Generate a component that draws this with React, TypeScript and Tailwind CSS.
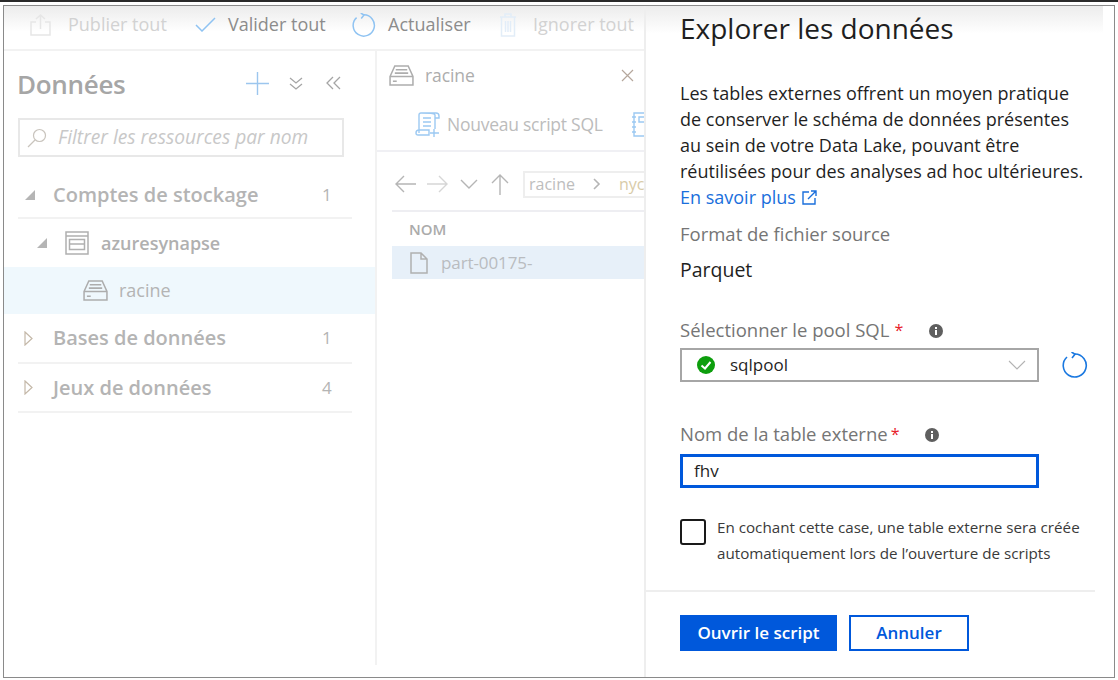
import React from 'react';

const uiFont = 'font-["Open_Sans","Noto_Sans",sans-serif]';

const ToolbarItem = ({ icon, label, labelClass, width }: { icon: React.ReactNode; label: string; labelClass: string; width: string }) => (
  <div className={`flex items-center shrink-0 ${width}`}>
    {icon}
    <span className={`text-[18px] whitespace-nowrap ${labelClass}`}>{label}</span>
  </div>
);

const DiskIcon = ({ className }: { className: string }) => (
  <svg viewBox="0 0 26 22" className={className} fill="none" stroke="#adadad" strokeWidth="1.6">
    <path d="M1 12 L6 1 H20 L25 12 V21 H1 Z M1 12 H25" />
    <path d="M7 5 H19 M6 8.5 H20" />
    <path d="M4 17 H8" />
  </svg>
);

const RefreshIcon = ({ className, color }: { className: string; color: string }) => (
  <svg viewBox="0 0 26 26" className={className} fill="none" stroke={color} strokeWidth="1.6">
    <path d="M13 2 A11.5 11.5 0 1 1 5 5" />
    <path d="M9.5 0 L13 2.2 L10 6" />
  </svg>
);

const Row = ({ label, count, open, height }: { label: string; count: string; open: boolean; height: string }) => (
  <div className={`ml-[14px] w-[334px] flex items-center border-b-2 border-[#f2f2f2] shrink-0 ${height}`}>
    <div className="w-[35px] flex justify-start pl-[6px]">
      {open ? (
        <svg width="12" height="12" viewBox="0 0 12 12"><path d="M11 1 V11 H1 Z" fill="#b5b5b5" /></svg>
      ) : (
        <svg width="9" height="15" viewBox="0 0 9 15" fill="none" stroke="#c4b8a8" strokeWidth="1.2"><path d="M1 1 L8 7.5 L1 14 Z" /></svg>
      )}
    </div>
    <span className="flex-1 text-[20px] font-semibold text-[#b4b4b4]">{label}</span>
    <span className="w-[30px] text-[17px] text-[#b4b4b4]">{count}</span>
  </div>
);

const Sidebar = () => (
  <div className="w-[373px] h-[614px] shrink-0 border-r-2 border-[#f2f2f2] flex flex-col">
    <div className="flex items-center h-[67px] pl-[13px]">
      <span className="text-[26px] font-semibold tracking-[-0.3px] text-[#a6a6a6] w-[229px]">Données</span>
      <div className="flex items-center mb-[3px]">
        <svg width="23" height="23" viewBox="0 0 23 23" stroke="#9cc6ee" strokeWidth="1.4"><path d="M11.5 0 V23 M0 11.5 H23" /></svg>
        <svg className="ml-[20px]" width="14" height="15" viewBox="0 0 14 15" fill="none" stroke="#a5a5a5" strokeWidth="1.3"><path d="M1 2 L7 7 L13 2 M1 8 L7 13 L13 8" /></svg>
        <svg className="ml-[23px]" width="15" height="14" viewBox="0 0 15 14" fill="none" stroke="#a5a5a5" strokeWidth="1.3"><path d="M7 1 L1 7 L7 13 M14 1 L8 7 L14 13" /></svg>
      </div>
    </div>
    <div className="ml-[14px] w-[326px] h-[39px] border-2 border-[#e8e8e8] flex items-center pl-[7px] shrink-0">
      <svg width="20" height="20" viewBox="0 0 20 20" fill="none" stroke="#c9c4bd" strokeWidth="1.2"><circle cx="12.5" cy="7.5" r="6" /><path d="M8 12 L1 19" /></svg>
      <span className="ml-[11px] text-[19.2px] italic text-[#c8c8c8] whitespace-nowrap">Filtrer les ressources par nom</span>
    </div>
    <div className="h-[16px] shrink-0" />
    <Row label="Comptes de stockage" count="1" open height="h-[46px]" />
    <div className="flex items-center h-[48px] pl-[32px] shrink-0">
      <svg width="12" height="12" viewBox="0 0 12 12"><path d="M11 1 V11 H1 Z" fill="#b5b5b5" /></svg>
      <svg className="ml-[17px]" width="24" height="24" viewBox="0 0 24 24" fill="none" stroke="#b0b0b0" strokeWidth="1.5">
        <path d="M1 1 H23 V23 H1 Z M1 5 H23 M4.5 8.5 H19.5 V13 H4.5 Z M4.5 13 H19.5 V18.5 H4.5 Z" />
      </svg>
      <span className="ml-[12px] text-[18px] font-semibold text-[#b0b0b0]">azuresynapse</span>
    </div>
    <div className="flex items-center h-[47px] bg-[#eff8fd] pl-[79px] shrink-0">
      <DiskIcon className="w-[25px] h-[21px]" />
      <span className="ml-[11px] text-[18px] text-[#b4b4b4]">racine</span>
    </div>
    <Row label="Bases de données" count="1" open={false} height="h-[50px]" />
    <Row label="Jeux de données" count="4" open={false} height="h-[49px]" />
  </div>
);

const Explorer = () => (
  <div className="w-[267px] overflow-hidden flex flex-col shrink-0">
    <div className="flex items-center h-[48px] pl-[12px] shrink-0">
      <DiskIcon className="w-[25px] h-[21px]" />
      <span className="ml-[11px] text-[17.5px] tracking-[-0.1px] text-[#adadad]">racine</span>
      <svg className="ml-[146px]" width="13" height="13" viewBox="0 0 13 13" stroke="#b5a79c" strokeWidth="1.2"><path d="M1 1 L12 12 M12 1 L1 12" /></svg>
    </div>
    <div className="flex items-center h-[53px] pl-[38px] border-b-2 border-[#f0f0f4] shrink-0">
      <svg className="shrink-0" width="25" height="25" viewBox="0 0 25 25" fill="none" stroke="#9cc9f2" strokeWidth="1.4">
        <path d="M4 21 V3 Q4 1 6 1 H21 Q24 1 24 4 V6 H20 M6 1 Q20 1 20 3 V17 M8 6 H16 M8 10 H16 M8 14 H16 M1 21 Q1 18 4 18 H14 V23 H3 Q1 23 1 21 M19 17 V25 M15 21 H24" />
      </svg>
      <span className="ml-[7px] text-[17.5px] tracking-[-0.25px] text-[#bcbcbc] whitespace-nowrap">Nouveau script SQL</span>
      <svg className="ml-[28px] shrink-0" width="24" height="25" viewBox="0 0 24 25" fill="none" stroke="#9cc9f2" strokeWidth="1.4">
        <path d="M3 1 H22 V24 H3 Z M1 5 H5 M1 10 H5 M1 15 H5 M1 20 H5 M8 5 H16 V10 H8 Z" />
      </svg>
    </div>
    <div className="flex items-center h-[44px] mt-[10px] pl-[18px] shrink-0">
      <svg className="shrink-0" width="22" height="18" viewBox="0 0 22 18" fill="none" stroke="#b5b5b5" strokeWidth="1.4"><path d="M21 9 H1 M9 1 L1 9 L9 17" /></svg>
      <svg className="ml-[9px] shrink-0" width="22" height="18" viewBox="0 0 22 18" fill="none" stroke="#d6d6d6" strokeWidth="1.4"><path d="M1 9 H21 M13 1 L21 9 L13 17" /></svg>
      <svg className="ml-[12px] shrink-0" width="18" height="10" viewBox="0 0 18 10" fill="none" stroke="#b5b5b5" strokeWidth="1.4"><path d="M1 1 L9 9 L17 1" /></svg>
      <svg className="ml-[13px] shrink-0" width="18" height="21" viewBox="0 0 18 21" fill="none" stroke="#b5b5b5" strokeWidth="1.4"><path d="M9 21 V1 M1 9 L9 1 L17 9" /></svg>
      <div className="ml-[14px] w-[130px] h-[27px] border-2 border-r-0 border-[#eeeeee] flex items-center pl-[4px] shrink-0 text-[16px] text-[#bdbdbd] whitespace-nowrap">
        racine
        <svg className="mx-[18px] shrink-0" width="8" height="12" viewBox="0 0 8 12" fill="none" stroke="#b5b5b5" strokeWidth="1.6"><path d="M1 1 L6 6 L1 11" /></svg>
        <span className="text-[#d8cba8]">nyc</span>
      </div>
    </div>
    <div className="ml-[15px] h-[36px] mt-[4px] border-t-2 border-[#eeeef2] flex items-center pl-[17px] shrink-0">
      <span className="text-[15px] font-semibold text-[#ababab]">NOM</span>
    </div>
    <div className="ml-[15px] h-[33px] bg-[#e7f0f9] flex items-center pl-[18px] shrink-0">
      <svg width="18" height="22" viewBox="0 0 18 22" fill="none" stroke="#b0b0b0" strokeWidth="1.5"><path d="M1 1 H11 L17 7 V21 H1 Z M11 1 V7 H17" /></svg>
      <span className="ml-[13px] text-[17px] tracking-[-0.1px] text-[#b9bcc0]">part-00175-</span>
    </div>
  </div>
);

const InfoDot = () => (
  <svg width="14" height="14" viewBox="0 0 14 14"><circle cx="7" cy="7" r="7" fill="#5f5f5f" /><rect x="6" y="6" width="2" height="5" fill="#fff" /><rect x="6" y="3" width="2" height="2" fill="#fff" /></svg>
);

const Panel = () => (
  <div className="flex-1 h-full border-l-2 border-[#eeeeee] flex flex-col pl-[34px] text-[#1f1f1f]">
    <div className="h-[46px] -ml-[34px] pl-[34px] mr-[11px] pb-[2px] flex items-center text-[28px] bg-gradient-to-b from-[#ececec] to-white to-[60%]">Explorer les données</div>
    <div className="mt-[28px] text-[18px] leading-[26px] whitespace-nowrap">
      <p>Les tables externes offrent un moyen pratique</p>
      <p>de conserver le schéma de données présentes</p>
      <p>au sein de votre Data Lake, pouvant être</p>
      <p>réutilisées pour des analyses ad hoc ultérieures.</p>
      <p className="flex items-center text-[#1a6fdc]">
        En savoir plus
        <svg className="ml-[6px]" width="15" height="15" viewBox="0 0 15 15" fill="none" stroke="#1a6fdc" strokeWidth="1.4"><path d="M7 2 H1 V14 H13 V8 M6 9 L14 1 M9 1 H14 V6" /></svg>
      </p>
    </div>
    <div className="mt-[11px] text-[18.5px] leading-[26px] text-[#757575]">Format de fichier source</div>
    <div className="mt-[10px] text-[19.5px] leading-[26px]">Parquet</div>
    <div className="mt-[34px] h-[26px] flex items-center text-[18.5px] text-[#757575]">
      Sélectionner le pool SQL<span className="ml-[5px] text-[#e8202a] text-[16px]">*</span>
      <span className="ml-[26px] mt-[1px] flex"><InfoDot /></span>
    </div>
    <div className="mt-[5px] flex items-center">
      <div className="w-[359px] h-[34px] border-2 border-[#a6a6a6] flex items-center pl-[15px]">
        <svg width="18" height="18" viewBox="0 0 18 18"><circle cx="9" cy="9" r="9" fill="#0d9e0d" /><path d="M4.5 9.5 L8 12.5 L13.5 6" fill="none" stroke="#fff" strokeWidth="2" /></svg>
        <span className="ml-[15px] text-[17px] flex-1">sqlpool</span>
        <svg className="mr-[11px]" width="18" height="10" viewBox="0 0 18 10" fill="none" stroke="#b3b3b3" strokeWidth="1.1"><path d="M1 1 L9 9 L17 1" /></svg>
      </div>
      <RefreshIcon className="ml-[23px] w-[26px] h-[26px]" color="#1a78e0" />
    </div>
    <div className="mt-[39px] h-[26px] flex items-center text-[18.5px] text-[#757575]">
      Nom de la table externe<span className="ml-[3px] text-[#e8202a] text-[16px]">*</span>
      <span className="ml-[26px] mt-[1px] flex"><InfoDot /></span>
    </div>
    <div className="mt-[7px] w-[359px] h-[34px] border-[3px] border-[#0058db] flex items-center pl-[11px] text-[17px] bg-white">fhv</div>
    <div className="mt-[31px] flex items-start">
      <div className="w-[26px] h-[26px] border-2 border-[#1a1a1a] rounded-[3px] shrink-0" />
      <div className="ml-[11px] -mt-[5px] text-[15.2px] leading-[26px] text-[#3a3a3a] whitespace-nowrap">
        <p>En cochant cette case, une table externe sera créée</p>
        <p>automatiquement lors de l’ouverture de scripts</p>
      </div>
    </div>
    <div className="mt-[24px] -ml-[34px] w-[449px] border-t-2 border-[#eeeeee]" />
    <div className="mt-[23px] flex gap-[12px]">
      <div className="w-[157px] h-[36px] bg-[#0058db] text-white flex items-center justify-center text-[17px] font-semibold">Ouvrir le script</div>
      <div className="w-[120px] h-[36px] border-2 border-[#0058db] text-[#0058db] flex items-center justify-center text-[17px] font-semibold">Annuler</div>
    </div>
  </div>
);

export default function App() {
  return (
    <div className={`w-[1118px] h-[680px] bg-white overflow-hidden ${uiFont}`}>
      <div className="h-[2px] bg-[#2a2a2a]" />
      <div className="h-[673px] mt-[3px] ml-[3px] w-[1112px] border border-[#8a8a8a] flex overflow-hidden bg-white">
        <div className="w-[640px] shrink-0 flex flex-col">
          <div className="h-[43px] pb-[6px] bg-gradient-to-b from-[#ececec] to-white to-[60%] flex items-center pl-[26px] shrink-0">
            <ToolbarItem width="w-[165px]" labelClass="text-[#d2d2d2] ml-[17px]" label="Publier tout" icon={
              <svg width="21" height="22" viewBox="0 0 21 22" fill="none" stroke="#e6e6e6" strokeWidth="1.5"><path d="M6 8 H1 V21 H20 V8 H15 M10.5 15 V1 M6 5 L10.5 1 L15 5" /></svg>
            } />
            <ToolbarItem width="w-[157px]" labelClass="text-[#8c8c8c] ml-[12px]" label="Valider tout" icon={
              <svg width="21" height="15" viewBox="0 0 21 15" fill="none" stroke="#8fc3f2" strokeWidth="1.5"><path d="M1 8 L7 14 L20 1" /></svg>
            } />
            <ToolbarItem width="w-[147px]" labelClass="text-[#8c8c8c] ml-[12px]" label="Actualiser" icon={
              <RefreshIcon className="w-[24px] h-[24px]" color="#8fc3f2" />
            } />
            <ToolbarItem width="w-[140px]" labelClass="text-[#d2d2d2] ml-[16px]" label="Ignorer tout" icon={
              <svg width="18" height="24" viewBox="0 0 18 24" fill="none" stroke="#e2edf8" strokeWidth="1.5"><path d="M1 4 H17 M6 4 V1 H12 V4 M2.5 4 V23 H15.5 V4 M6.5 8 V19 M9 8 V19 M11.5 8 V19" /></svg>
            } />
          </div>
          <div className="h-[2px] bg-[#f2f2f2] shrink-0" />
          <div className="flex flex-1 min-h-0">
            <Sidebar />
            <Explorer />
          </div>
        </div>
        <Panel />
      </div>
    </div>
  );
}
